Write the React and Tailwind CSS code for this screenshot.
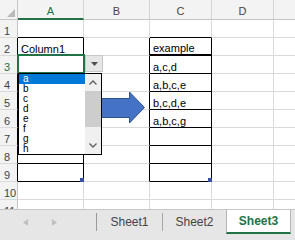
import React from 'react';

const cols = [
  { id: 'A', w: 'w-[66px]' },
  { id: 'B', w: 'w-[66px]' },
  { id: 'C', w: 'w-[62px]' },
  { id: 'D', w: 'w-[62px]' },
  { id: 'E', w: 'w-[40px]' },
];

const cValues = { 2: 'example', 3: 'a,c,d', 4: 'a,b,c,e', 5: 'b,c,d,e', 6: 'a,b,c,g' };
const listItems = ['a', 'b', 'c', 'd', 'e', 'f', 'g', 'h'];
const inBox = (r) => r >= 2 && r <= 9;

const Cell = ({ row, col }) => {
  // gridline colours, with the black outline of the two tables
  let cls = 'border-r border-b border-r-[#dadada] border-b-[#dadada]';
  if (col === 'A' || col === 'C') {
    if (inBox(row)) cls = 'border-r border-b border-r-black border-b-black';
    if (row === 1) cls = 'border-r border-b border-r-[#dadada] border-b-black';
    if (col === 'C' && row === 2) cls = 'border-r border-b-2 border-r-black border-b-black';
  }
  if (col === 'B' && inBox(row)) cls = 'border-r border-b border-r-black border-b-[#dadada]';
  const w = cols.find((c) => c.id === col).w;
  const text = col === 'A' && row === 2 ? 'Column1' : col === 'C' ? cValues[row] : null;
  return (
    <div className={`${w} h-full shrink-0 ${cls} flex items-end pl-[3px] text-[11px] leading-[11px] text-black`}>
      {text}
    </div>
  );
};

const Row = ({ row }) => (
  <div className="flex h-[18px] shrink-0">
    <div
      className={`w-[18px] h-full shrink-0 bg-[#f3f3f3] border-b border-b-[#dadada] border-r ${
        inBox(row) ? 'border-r-black' : 'border-r-[#c6c6c6]'
      } flex items-end pl-[4px] text-[11px] leading-[11px] ${row === 3 ? 'text-[#217346]' : 'text-[#444]'}`}
    >
      {row}
    </div>
    {cols.map((c) => (
      <Cell key={c.id} row={row} col={c.id} />
    ))}
  </div>
);

const Chevron = ({ up }) => (
  <svg width="8" height="5" viewBox="0 0 8 5">
    <path d={up ? 'M0.5 4.5 L4 1 L7.5 4.5' : 'M0.5 0.5 L4 4 L7.5 0.5'} fill="none" stroke="#606060" strokeWidth="1.4" />
  </svg>
);

export default function App() {
  return (
    <div className="w-[295px] h-[240px] overflow-hidden bg-white flex flex-col font-['Liberation_Sans',Arial,sans-serif]">
      {/* Grid */}
      <div className="relative h-[209px] shrink-0 overflow-hidden">
        <div className="flex h-[20px]">
          <div className="w-[18px] h-full shrink-0 bg-[#f3f3f3] border-r border-b border-[#c6c6c6] flex items-end justify-end pr-[2px] pb-[2px]">
            <svg width="8" height="8" viewBox="0 0 8 8">
              <polygon points="8,0 8,8 0,8" fill="#b9b9b9" />
            </svg>
          </div>
          {cols.map((c) => (
            <div
              key={c.id}
              className={`${c.w} h-full shrink-0 bg-[#f3f3f3] border-r border-r-[#d4d4d4] flex items-end justify-center text-[11px] leading-[11px] ${
                c.id === 'A'
                  ? 'border-b-2 border-b-[#217346] text-[#217346] pb-[1px]'
                  : 'border-b border-b-[#c6c6c6] text-[#444] pb-[2px]'
              }`}
            >
              {c.id === 'E' ? '' : c.id}
            </div>
          ))}
        </div>
        {[1, 2, 3, 4, 5, 6, 7, 8, 9, 10, 11].map((r) => (
          <Row key={r} row={r} />
        ))}

        {/* fill handles */}
        <div className="absolute left-[80px] top-[178px] w-[4px] h-[4px] bg-[#3b4fa0]" />
        <div className="absolute left-[208px] top-[178px] w-[4px] h-[4px] bg-[#3b4fa0]" />

        {/* arrow */}
        <svg className="absolute left-[98px] top-[90px]" width="50" height="36" viewBox="0 0 50 36">
          <polygon points="1.5,8.5 31.5,8.5 31.5,2 46.5,17.5 31.5,33 31.5,27.5 1.5,27.5" fill="#4472c4" stroke="#2f528f" strokeWidth="1" />
        </svg>

        {/* active cell */}
        <div className="absolute left-[17px] top-[54px] w-[68px] h-[20px] border-2 border-[#217346]" />

        {/* dropdown button */}
        <div className="absolute left-[85px] top-[55px] w-[18px] h-[17px] bg-[#e6e6e6] border border-[#c8c8c8] flex items-center justify-center">
          <svg width="7" height="4" viewBox="0 0 7 4">
            <polygon points="0,0 7,0 3.5,4" fill="#505050" />
          </svg>
        </div>

        {/* list */}
        <div className="absolute left-[18px] top-[73px] w-[84px] h-[82px] bg-white border border-black flex">
          <div className="w-[66px] flex flex-col text-[10px] leading-[10px] text-black">
            {listItems.map((it, i) => (
              <div key={it} className={`h-[10px] pl-[4px] ${i === 0 ? 'bg-[#0078d7] text-white' : ''}`}>
                {it}
              </div>
            ))}
          </div>
          <div className="w-[16px] bg-[#f0f0f0] flex flex-col">
            <div className="h-[17px] flex items-center justify-center">
              <Chevron up />
            </div>
            <div className="h-[36px] bg-[#cdcdcd]" />
            <div className="h-[10px]" />
            <div className="h-[17px] flex items-center justify-center">
              <Chevron />
            </div>
          </div>
        </div>
      </div>

      {/* Sheet tabs */}
      <div className="flex-1 bg-[#e6e6e6] border-t border-[#c6c6c6] flex flex-col">
        <div className="flex h-[24px] items-stretch">
          <div className="w-[96px] flex items-center">
            <svg className="ml-[23px]" width="5" height="7" viewBox="0 0 5 7">
              <polygon points="5,0 5,7 0,3.5" fill="#c0c0c0" />
            </svg>
            <svg className="ml-[24px]" width="5" height="7" viewBox="0 0 5 7">
              <polygon points="0,0 0,7 5,3.5" fill="#c0c0c0" />
            </svg>
          </div>
          <div className="w-px my-[3px] bg-[#9a9a9a]" />
          <div className="w-[65px] flex items-center justify-center text-[12px] text-[#444]">Sheet1</div>
          <div className="w-px my-[3px] bg-[#a8a8a8]" />
          <div className="w-[63px] flex items-center justify-center text-[12px] text-[#444]">Sheet2</div>
          <div className="w-[65px] bg-white border-x border-x-[#b5b5b5] border-b-2 border-b-[#217346] flex items-center justify-center text-[12px] font-bold text-[#217346]">
            Sheet3
          </div>
        </div>
      </div>
    </div>
  );
}
